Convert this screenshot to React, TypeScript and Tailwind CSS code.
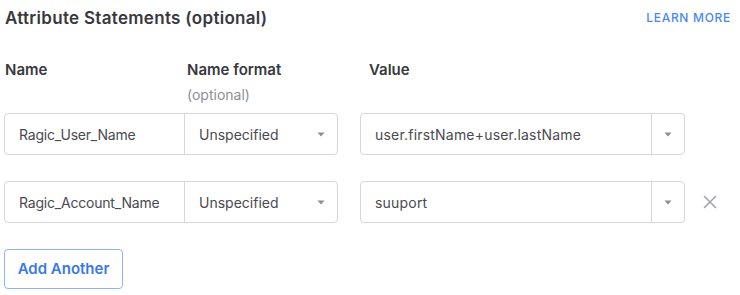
import React from "react";

const Caret = () => (
  <svg width="8" height="5" viewBox="0 0 8 5" className="block">
    <path d="M0.5 0.5 L7.5 0.5 L4 4.5 Z" fill="#8c8c96" />
  </svg>
);

const XIcon = () => (
  <svg width="14" height="14" viewBox="0 0 14 14" className="block">
    <path d="M1.5 1.5 L12.5 12.5 M12.5 1.5 L1.5 12.5" stroke="#a3a3ab" strokeWidth="1.6" strokeLinecap="round" />
  </svg>
);

function Row({ name, value, removable }: { name: string; value: string; removable?: boolean }) {
  return (
    <div className="flex items-center h-[42px]">
      <div className="flex h-full w-[334px] border border-[#d6d6dc] rounded-[4px] bg-white">
        <div className="w-[180px] shrink-0 border-r border-[#d6d6dc] flex items-center pl-[14px] pr-[5px] overflow-hidden whitespace-nowrap text-[14px] tracking-[-0.2px] text-[#4a4a50]">
          <span className="overflow-hidden">{name}</span>
        </div>
        <div className="flex-1 flex items-center justify-between pl-[14px] pr-[12px] text-[14px] text-[#4a4a50]">
          <span>Unspecified</span>
          <Caret />
        </div>
      </div>
      <div className="ml-[22px] flex h-full w-[325px] border border-[#d6d6dc] rounded-[4px] bg-white">
        <div className="flex-1 flex items-center pl-[14px] text-[14px] text-[#4a4a50] whitespace-nowrap tracking-[0.2px]">
          {value}
        </div>
        <div className="w-[33px] border-l border-[#d6d6dc] flex items-center justify-center">
          <Caret />
        </div>
      </div>
      {removable && (
        <div className="ml-[18px]">
          <XIcon />
        </div>
      )}
    </div>
  );
}

export default function App() {
  return (
    <div
      className="w-[740px] h-[295px] bg-white pl-[4px] pr-[9px] overflow-hidden"
      style={{ fontFamily: 'Inter, "Liberation Sans", Arial, sans-serif' }}
    >
      <div className="flex items-start justify-between pt-[8px]">
        <div className="text-[17px] leading-[20px] font-semibold text-[#38383d] pl-[1px] tracking-[0.3px]">
          Attribute Statements (optional)
        </div>
        <div className="text-[12px] leading-[20px] font-medium text-[#4a8af0] tracking-[0.7px]">
          LEARN MORE
        </div>
      </div>
      <div className="flex mt-[32px] h-[20px]">
        <div className="w-[180px] pl-[1px] text-[15px] leading-[20px] font-semibold text-[#38383d]">Name</div>
        <div className="w-[185px] pl-[3px] text-[15px] leading-[20px] font-semibold text-[#38383d]">Name format</div>
        <div className="pl-[0px] text-[15px] leading-[20px] font-semibold text-[#38383d]">Value</div>
      </div>
      <div className="ml-[183px] mt-[5px] text-[14px] leading-[20px] text-[#8e8e96]">(optional)</div>
      <div className="mt-[8px] flex flex-col gap-[26px]">
        <Row name="Ragic_User_Name" value="user.firstName+user.lastName" />
        <Row name="Ragic_Account_Name" value="suuport" removable />
      </div>
      <button className="mt-[26px] h-[40px] w-[119px] border border-[#8db4f5] rounded-[4px] text-[15px] font-semibold text-[#3b78e7] bg-white">
        Add Another
      </button>
    </div>
  );
}
